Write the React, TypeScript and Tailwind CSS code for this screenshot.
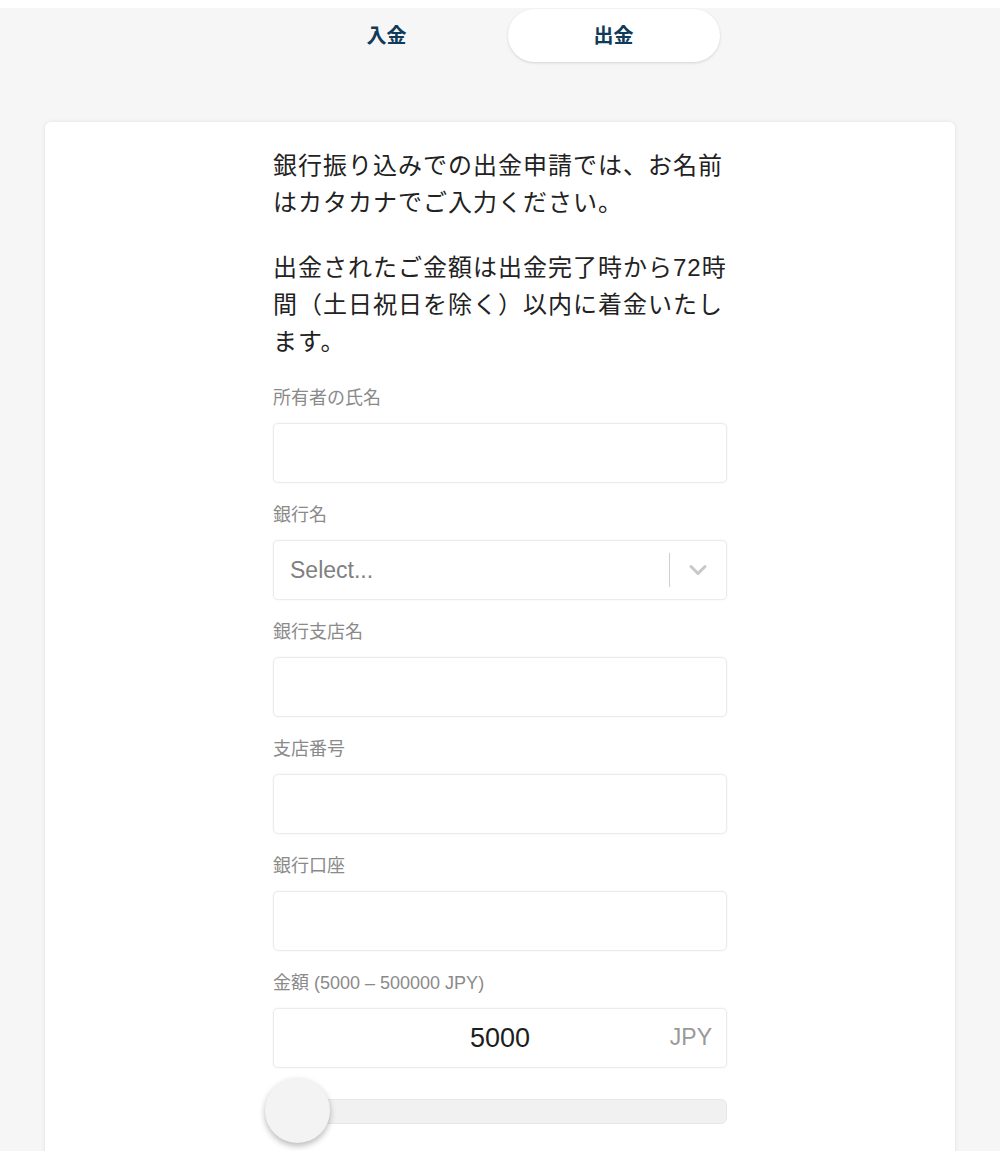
import { ChevronDown } from "lucide-react"

const font = { fontFamily: '"Liberation Sans", "Noto Sans CJK JP", sans-serif' }

const Field = ({ label, children }: { label: string; children: React.ReactNode }) => (
	<div className="mt-[20px] first:mt-0">
		<div className="text-[18px] leading-[24px] text-[#8a8a8a] mb-[13px]">{label}</div>
		{children}
	</div>
)

const TextBox = () => (
	<div className="h-[60px] rounded-[5px] border border-[#ebebeb] bg-white shadow-[0_0_3px_rgba(0,0,0,0.05)]"></div>
)

const App = () => {
	return (
		<div className="bg-white pt-[8px] min-h-[1156px]" style={font}>
			<div className="bg-[#f6f6f6] h-[1143px] overflow-hidden">
				{/* Tabs */}
				<div className="flex justify-center gap-[15px] pt-[1px]">
					<button className="w-[212px] h-[53px] rounded-full text-[20px] font-bold text-[#0f3a5a]">入金</button>
					<button className="w-[212px] h-[53px] rounded-full bg-white text-[20px] font-bold text-[#0f3a5a] shadow-[0_1px_3px_rgba(0,0,0,0.14)]">出金</button>
				</div>

				{/* Card */}
				<div className="mx-[45px] mt-[60px] bg-white rounded-[6px] shadow-[0_0_4px_rgba(0,0,0,0.09)] h-[1100px]">
					<div className="w-[454px] mx-auto pt-[25px]">
						<p className="text-[24px] leading-[37px] tracking-[1px] text-[#222] mb-[28px]">
							銀行振り込みでの出金申請では、お名前はカタカナでご入力ください。
						</p>
						<p className="text-[24px] leading-[37px] tracking-[1px] text-[#222] mb-[26px]">
							出金されたご金額は出金完了時から72時間（土日祝日を除く）以内に着金いたします。
						</p>

						<div className="flex flex-col">
							<Field label="所有者の氏名"><TextBox /></Field>
							<Field label="銀行名">
								<div className="h-[60px] rounded-[5px] border border-[#ebebeb] bg-white shadow-[0_0_3px_rgba(0,0,0,0.05)] flex items-center">
									<span className="flex-1 pl-[16px] text-[23px] text-[#808080]">Select...</span>
									<div className="w-px h-[34px] bg-[#cfcfcf]"></div>
									<div className="w-[56px] flex justify-center text-[#c8c8c8]">
										<ChevronDown size={28} strokeWidth={2.6} />
									</div>
								</div>
							</Field>
							<Field label="銀行支店名"><TextBox /></Field>
							<Field label="支店番号"><TextBox /></Field>
							<Field label="銀行口座"><TextBox /></Field>
							<Field label="金額 (5000 – 500000 JPY)">
								<div className="relative h-[60px] rounded-[5px] border border-[#ebebeb] bg-white shadow-[0_0_3px_rgba(0,0,0,0.05)] flex items-center justify-center">
									<span className="text-[27px] text-[#1e1e1e]">5000</span>
									<span className="absolute right-[14px] top-[11px] text-[23px] text-[#999]">JPY</span>
								</div>
							</Field>
						</div>

						{/* Slider */}
						<div className="relative h-[66px] mt-[10px]">
							<div className="absolute left-0 right-0 top-[21px] h-[25px] rounded-[6px] bg-[#f1f1f1] border border-[#e7e7e7]"></div>
							<div className="absolute left-[-8px] top-0 w-[65px] h-[65px] rounded-full bg-[#f3f3f3] shadow-[0_3px_6px_rgba(0,0,0,0.28)]"></div>
						</div>
					</div>
				</div>
			</div>
		</div>
	)
}

export default App
